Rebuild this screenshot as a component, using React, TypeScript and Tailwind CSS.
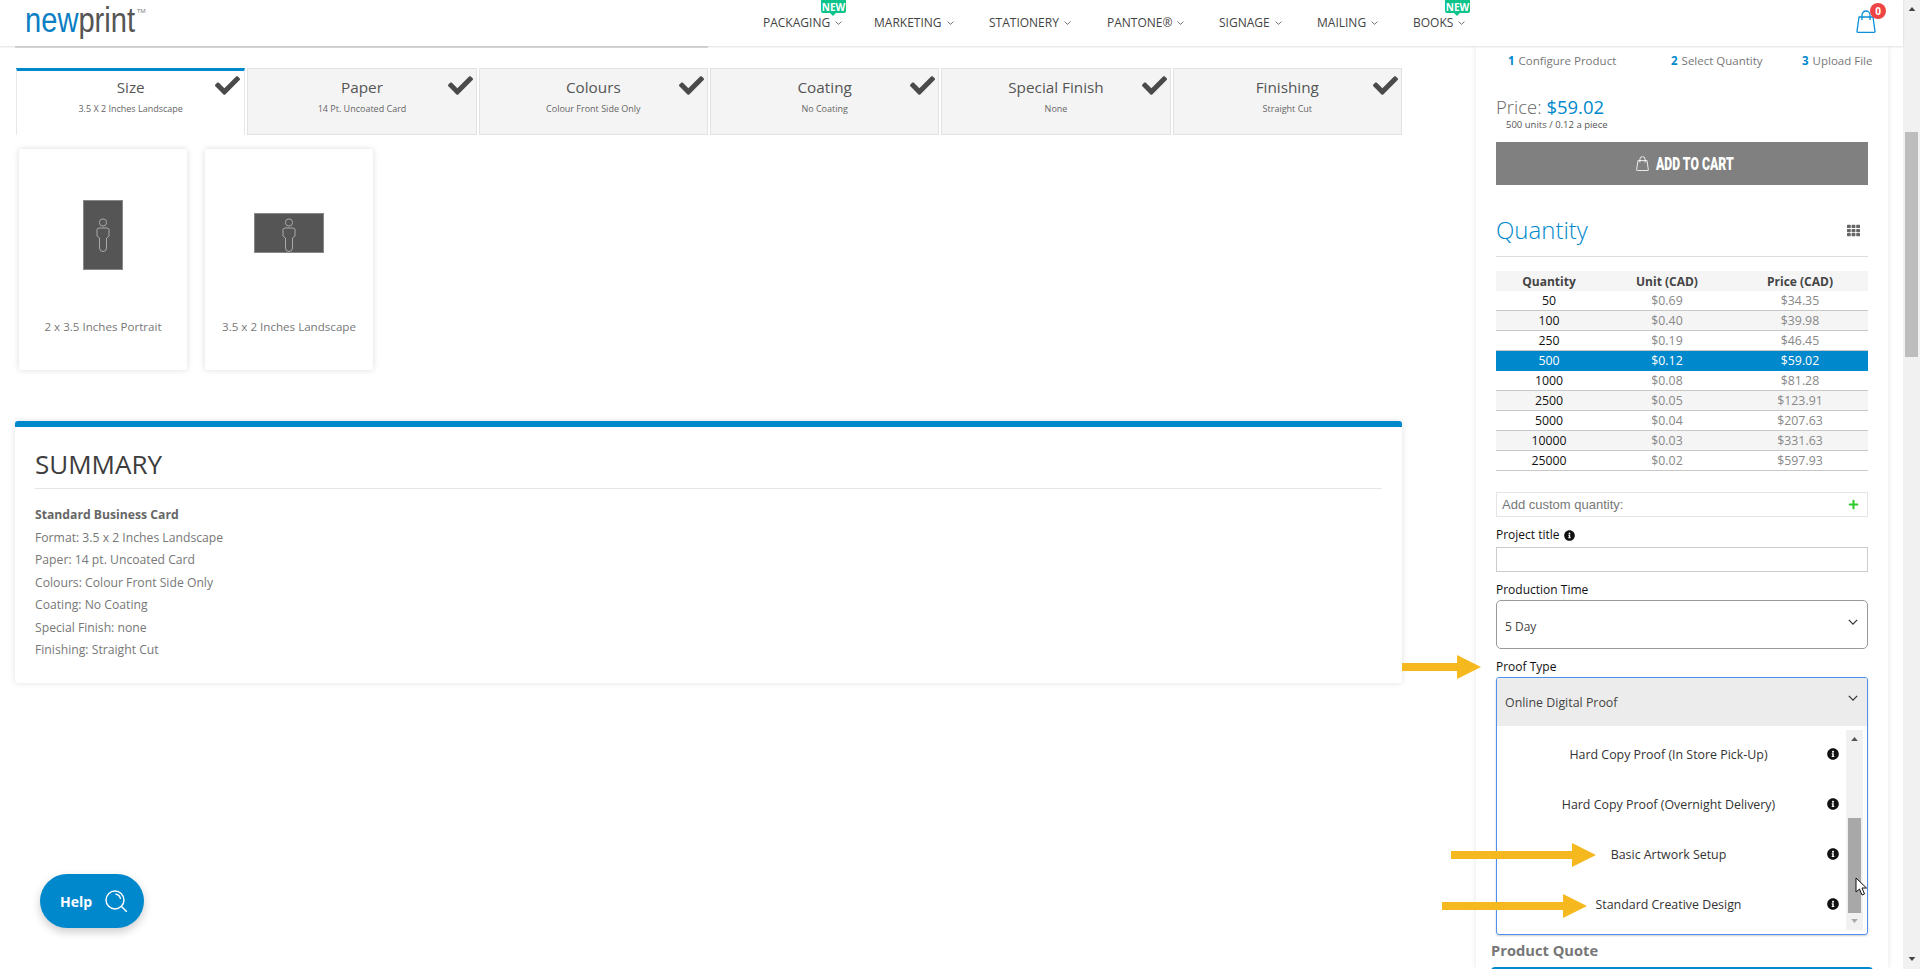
import React from "react";
import { FaCheck, FaInfoCircle, FaPlus, FaTh } from "react-icons/fa";

const tabs = [
  ["Size", "3.5 X 2 Inches Landscape"],
  ["Paper", "14 Pt. Uncoated Card"],
  ["Colours", "Colour Front Side Only"],
  ["Coating", "No Coating"],
  ["Special Finish", "None"],
  ["Finishing", "Straight Cut"],
];

const nav = [
  { label: "PACKAGING", w: "w-[111px]", badge: "left-[58px]" },
  { label: "MARKETING", w: "w-[115px]" },
  { label: "STATIONERY", w: "w-[118px]" },
  { label: "PANTONE®", w: "w-[112px]" },
  { label: "SIGNAGE", w: "w-[98px]" },
  { label: "MAILING", w: "w-[96px]" },
  { label: "BOOKS", w: "w-[80px]", badge: "left-[32px]" },
];

const rows = [
  ["50", "$0.69", "$34.35"],
  ["100", "$0.40", "$39.98"],
  ["250", "$0.19", "$46.45"],
  ["500", "$0.12", "$59.02"],
  ["1000", "$0.08", "$81.28"],
  ["2500", "$0.05", "$123.91"],
  ["5000", "$0.04", "$207.63"],
  ["10000", "$0.03", "$331.63"],
  ["25000", "$0.02", "$597.93"],
];

const summary = [
  "Format: 3.5 x 2 Inches Landscape",
  "Paper: 14 pt. Uncoated Card",
  "Colours: Colour Front Side Only",
  "Coating: No Coating",
  "Special Finish: none",
  "Finishing: Straight Cut",
];

const options = [
  "Hard Copy Proof (In Store Pick-Up)",
  "Hard Copy Proof (Overnight Delivery)",
  "Basic Artwork Setup",
  "Standard Creative Design",
];

function Chevron({ className }: { className: string }) {
  return (
    <svg viewBox="0 0 12 7" fill="none" stroke="currentColor" strokeWidth="1.5" className={className}>
      <path d="M1 1l5 5 5-5" />
    </svg>
  );
}

function Bag({ className }: { className: string }) {
  return (
    <svg viewBox="0 0 20 23" fill="none" stroke="currentColor" strokeWidth="1.3" className={className}>
      <path d="M3 7h14l2 14.4a.8.8 0 0 1-.8.9H1.8a.8.8 0 0 1-.8-.9z" strokeLinejoin="round" />
      <path d="M6 10V5a4 4 0 0 1 8 0v5" />
    </svg>
  );
}

function Person() {
  return (
    <svg viewBox="0 0 14 34" fill="none" stroke="#aaaaaa" strokeWidth="1" className="h-[34px] w-[14px]">
      <circle cx="7" cy="4.5" r="3.6" />
      <path d="M3 10h8a2 2 0 0 1 2 2v6l-2.5 2v10a3.5 3.5 0 0 1-7 0V20L1 18v-6a2 2 0 0 1 2-2z" />
    </svg>
  );
}

function Triangle({ dir, className }: { dir: "up" | "down"; className: string }) {
  return (
    <svg viewBox="0 0 10 6" className={className} fill="currentColor">
      <path d={dir === "up" ? "M5 0l5 6H0z" : "M5 6l5-6H0z"} />
    </svg>
  );
}

function Arrow({ className, shaft }: { className: string; shaft: number }) {
  return (
    <svg viewBox={`0 0 ${shaft + 24} 24`} className={className} fill="#f5b91f">
      <path d={`M0 8h${shaft}V0l24 12-24 12v-8H0z`} />
    </svg>
  );
}

export default function App() {
  return (
    <div className="relative flex h-[969px] w-[1920px] overflow-hidden bg-white font-['Open_Sans',sans-serif] text-[#555]">
      <div className="flex w-[1903px] flex-col">
        <header className="relative z-10 flex h-[46px] shrink-0 items-center bg-white pl-[25px] shadow-[0_1px_2px_rgba(0,0,0,0.12)]">
          <div className="relative h-[46px] w-[738px] shrink-0">
            <div className="origin-left scale-x-[0.82] whitespace-nowrap font-['Liberation_Sans',sans-serif] text-[35.5px] leading-[40px]">
              <span className="text-[#0a7fc4]">new</span>
              <span className="text-[#555]">print</span>
            </div>
            <span className="absolute left-[112px] top-[7px] text-[6px] leading-[8px] text-[#777]">TM</span>
          </div>
          <nav className="flex items-center">
            {nav.map((n) => (
              <div key={n.label} className={`relative flex h-[46px] items-center text-[12px] text-[#444] ${n.w}`}>
                <span>{n.label}</span>
                <Chevron className="ml-[5px] h-[4px] w-[7px] text-[#555]" />
                {n.badge && (
                  <span className={`absolute top-0 flex h-[13px] w-[25px] items-center justify-center rounded-b-[2px] bg-[#0cc38a] text-[10px] font-bold leading-none text-white after:absolute after:left-[9px] after:top-[13px] after:border-x-[3px] after:border-t-[3px] after:border-x-transparent after:border-t-[#0cc38a] ${n.badge}`}>
                    NEW
                  </span>
                )}
              </div>
            ))}
          </nav>
          <div className="absolute left-[1856px] top-[10px] h-[22px] w-[19px] text-[#0a8fd8]">
            <Bag className="h-[23px] w-[20px]" />
            <span className="absolute left-[14px] top-[-7px] flex h-[16px] w-[16px] items-center justify-center rounded-full bg-[#ef4444] text-[10px] font-bold text-white">
              0
            </span>
          </div>
        </header>

        <div className="flex min-h-0 flex-1">
          <main className="w-[1476px] shrink-0 pl-[15px]">
            <div className="h-[2px] w-[693px] bg-[#ddd]" />
            <div className="ml-[1px] mt-[20px] grid w-[1386px] grid-cols-6 gap-[2px]">
              {tabs.map(([t, s], i) => (
                <div
                  key={t}
                  className={
                    i === 0
                      ? "relative h-[67px] border-x border-x-[#e8e8e8] border-t-[3px] border-t-[#0088cc] bg-white text-center"
                      : "relative h-[67px] border border-[#e2e2e2] bg-[#f4f4f4] text-center"
                  }
                >
                  <div className={i === 0 ? "mt-[6px] text-[15.3px] leading-[20px] text-[#555]" : "mt-[8px] text-[15.3px] leading-[20px] text-[#555]"}>{t}</div>
                  <div className="mt-[6px] text-[9px] leading-[12px] text-[#666]">{s}</div>
                  <FaCheck className={i === 0 ? "absolute right-[4px] top-[2px] h-[25px] w-[25px] text-[#4a4a4a]" : "absolute right-[3px] top-[4px] h-[25px] w-[25px] text-[#4a4a4a]"} />
                </div>
              ))}
            </div>

            <div className="ml-[4px] mt-[14px] flex gap-[18px]">
              <div className="flex h-[221px] w-[168px] flex-col items-center rounded-[3px] bg-white pt-[51px] shadow-[0_0_6px_rgba(0,0,0,0.14)]">
                <div className="flex h-[70px] w-[40px] items-start justify-center border border-[#888] bg-[#555] pt-[17px]">
                  <Person />
                </div>
                <div className="mt-[48px] text-[11.6px] leading-[18px] text-[#777]">2 x 3.5 Inches Portrait</div>
              </div>
              <div className="flex h-[221px] w-[168px] flex-col items-center rounded-[3px] bg-white pt-[64px] shadow-[0_0_6px_rgba(0,0,0,0.14)]">
                <div className="flex h-[40px] w-[70px] items-start justify-center border border-[#888] bg-[#555] pt-[4px]">
                  <Person />
                </div>
                <div className="mt-[65px] text-[11.6px] leading-[18px] text-[#777]">3.5 x 2 Inches Landscape</div>
              </div>
            </div>

            <section className="mt-[51px] h-[262px] w-[1387px] rounded-[3px] border-t-[6px] border-t-[#0088cc] bg-white px-[20px] shadow-[0_0_6px_rgba(0,0,0,0.12)]">
              <h2 className="flex h-[62px] items-center border-b border-[#e6e6e6] pt-[13px] text-[26px] font-medium text-[#3d3d3d]">SUMMARY</h2>
              <div className="mt-[15px] text-[12.2px] leading-[22.5px] text-[#777]">
                <div className="font-bold text-[#666]">Standard Business Card</div>
                {summary.map((s) => (
                  <div key={s}>{s}</div>
                ))}
              </div>
            </section>
          </main>

          <aside className="h-[923px] w-[412px] shrink-0 overflow-hidden bg-white pl-[20px] shadow-[0_0_6px_rgba(0,0,0,0.1)]">
            <div className="w-[372px]">
              <div className="flex h-[30px] items-center pl-[12px] text-[11.5px] text-[#777]">
                <div className="w-[163px] shrink-0 whitespace-nowrap"><b className="mr-[4px] font-bold text-[#0088cc]">1</b>Configure Product</div>
                <div className="w-[131px] shrink-0 whitespace-nowrap"><b className="mr-[4px] font-bold text-[#0088cc]">2</b>Select Quantity</div>
                <div className="shrink-0 whitespace-nowrap"><b className="mr-[4px] font-bold text-[#0088cc]">3</b>Upload File</div>
              </div>
              <div className="mt-[19px] h-[24px] text-[18.5px] font-light leading-[24px] text-[#666]">
                Price: <span className="font-normal text-[#0088cc]">$59.02</span>
              </div>
              <div className="h-[12px] pl-[10px] text-[9.5px] leading-[12px] text-[#555]">500 units / 0.12 a piece</div>
              <button className="mt-[11px] flex h-[43px] w-full items-center justify-center bg-[#808080] pl-[4px] text-white">
                <Bag className="mr-[7px] h-[15px] w-[13px]" />
                <span className="w-[77px] whitespace-nowrap text-left">
                  <span className="inline-block origin-left scale-x-[0.68] font-['Roboto',sans-serif] text-[18px] font-black leading-[20px]">ADD TO CART</span>
                </span>
              </button>
              <div className="mt-[25px] flex h-[40px] items-center justify-between pr-[8px]">
                <span className="text-[24px] font-light text-[#0088cc]">Quantity</span>
                <FaTh className="h-[13px] w-[13px] text-[#666]" />
              </div>
              <div className="mt-[6px] h-px bg-[#ddd]" />

              <div className="mt-[14px] text-center text-[12.3px] leading-[19px]">
                <div className="grid h-[20px] grid-cols-[106px_130px_136px] items-center bg-[#f5f5f5] text-[12px] font-bold text-[#444]">
                  <span>Quantity</span>
                  <span>Unit (CAD)</span>
                  <span>Price (CAD)</span>
                </div>
                {rows.map((r, i) => (
                  <div
                    key={r[0]}
                    className={
                      i === 3
                        ? "grid h-[20px] grid-cols-[106px_130px_136px] border-b border-[#0088cc] bg-[#0088cc] text-white"
                        : i % 2 === 1
                          ? "grid h-[20px] grid-cols-[106px_130px_136px] border-b border-[#c8c8c8] bg-[#f5f5f5] text-[#888]"
                          : "grid h-[20px] grid-cols-[106px_130px_136px] border-b border-[#c8c8c8] bg-white text-[#888]"
                    }
                  >
                    <span className={i === 3 ? "text-white" : "text-[#111]"}>{r[0]}</span>
                    <span>{r[1]}</span>
                    <span>{r[2]}</span>
                  </div>
                ))}
              </div>

              <div className="mt-[21px] flex h-[25px] items-center justify-between border border-[#e5e5e5] pl-[5px] pr-[8px] font-['Liberation_Sans',sans-serif] text-[13px] text-[#777]">
                <span>Add custom quantity:</span>
                <FaPlus className="h-[11px] w-[11px] text-[#2ecc2e]" />
              </div>

              <div className="mt-[9px] flex h-[18px] items-center text-[12px] text-[#111]">
                Project title
                <FaInfoCircle className="ml-[4px] h-[11px] w-[11px] text-[#111]" />
              </div>
              <div className="mt-[3px] h-[25px] border border-[#ccc]" />

              <div className="mt-[9px] flex h-[18px] items-center text-[12px] text-[#111]">Production Time</div>
              <div className="mt-px flex h-[49px] justify-between rounded-[5px] border border-[#999] pl-[8px] pr-[9px] text-[12px] text-[#444]">
                <span className="mt-[17px] leading-[18px]">5 Day</span>
                <Chevron className="mt-[18px] h-[6px] w-[10px] text-[#333]" />
              </div>

              <div className="mt-[9px] flex h-[18px] items-center text-[12px] text-[#111]">Proof Type</div>
              <div className="mt-px h-[258px] rounded-[3px] border border-[#4d90ee] shadow-[0_1px_2px_rgba(0,0,0,0.2)]">
                <div className="flex h-[48px] justify-between rounded-t-[2px] bg-[#ececec] pl-[8px] pr-[9px] text-[12.4px] text-[#444]">
                  <span className="mt-[16px] leading-[18px]">Online Digital Proof</span>
                  <Chevron className="mt-[17px] h-[6px] w-[10px] text-[#333]" />
                </div>
                <div className="flex h-[208px]">
                  <div className="w-[349px] pt-[4px]">
                    {options.map((o) => (
                      <div key={o} className="flex h-[50px] items-center pl-[14px] pr-[6px] text-[12.4px] text-[#333]">
                        <span className="flex-1 text-center">{o}</span>
                        <FaInfoCircle className="-mt-[3px] h-[12px] w-[14px] text-[#111]" />
                      </div>
                    ))}
                  </div>
                  <div className="mt-[4px] flex h-[200px] w-[17px] flex-col items-center bg-[#f1f1f1]">
                    <Triangle dir="up" className="mt-[7px] h-[4px] w-[7px] text-[#555]" />
                    <div className="mt-[77px] h-[95px] w-[13px] bg-[#a8a8a8]" />
                    <Triangle dir="down" className="mt-[6px] h-[4px] w-[7px] text-[#a8a8a8]" />
                  </div>
                </div>
              </div>

              <div className="-ml-[5px] mt-[3px] flex h-[24px] items-center text-[14.7px] font-bold text-[#777]">Product Quote</div>
              <div className="-mx-[5px] mt-[5px] h-[10px] rounded-t-[4px] bg-[#0088cc]" />
            </div>
          </aside>
        </div>
      </div>

      <div className="flex w-[17px] flex-col items-center bg-[#f1f1f1]">
        <Triangle dir="up" className="mt-[7px] h-[4px] w-[8px] text-[#444]" />
        <div className="mt-[121px] h-[225px] w-[13px] bg-[#bdbdbd]" />
        <Triangle dir="down" className="mt-[600px] h-[4px] w-[8px] text-[#444]" />
      </div>

      <button className="absolute left-[40px] top-[874px] flex h-[54px] w-[104px] items-center rounded-[27px] bg-[#0088cc] pl-[20px] text-[14px] font-bold text-white shadow-[0_4px_10px_rgba(0,0,0,0.2)]">
        Help
        <svg viewBox="0 0 22 22" fill="none" stroke="white" className="ml-[13px] h-[22px] w-[22px]" strokeWidth="1.4">
          <circle cx="10" cy="10" r="9" />
          <path d="M10.5 4a6 6 0 0 1 5 5" />
          <path d="M16.5 16.5L22 22" />
        </svg>
      </button>

      <Arrow shaft={55} className="absolute left-[1402px] top-[655px] h-[24px] w-[79px]" />
      <Arrow shaft={121} className="absolute left-[1451px] top-[843px] h-[24px] w-[145px]" />
      <Arrow shaft={121} className="absolute left-[1442px] top-[894px] h-[24px] w-[145px]" />

      <svg viewBox="0 0 12 19" className="absolute left-[1855px] top-[877px] h-[19px] w-[12px]">
        <path d="M1 1v14l3.5-3 2.5 6 2.5-1-2.5-6h4.5z" fill="white" stroke="#111" strokeWidth="1" />
      </svg>
    </div>
  );
}
